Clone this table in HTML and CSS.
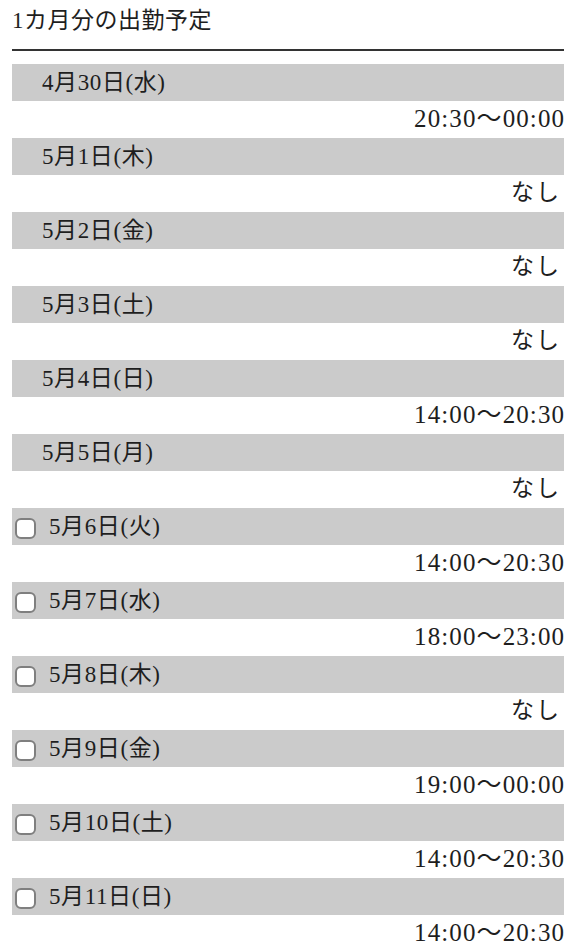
FILE: index.html
```html
<!DOCTYPE html>
<html lang="ja">
<head>
<meta charset="utf-8">
<link rel="stylesheet" href="styles.css">
</head>
<body>
<div class="page">
  <h1 class="title">1カ月分の出勤予定</h1>
  <hr class="rule">
  <ul class="schedule">
    <li class="day"><div class="date"><span class="label">4月30日(水)</span></div><div class="time">20:30〜00:00</div></li>
    <li class="day"><div class="date"><span class="label">5月1日(木)</span></div><div class="time none">なし</div></li>
    <li class="day"><div class="date"><span class="label">5月2日(金)</span></div><div class="time none">なし</div></li>
    <li class="day"><div class="date"><span class="label">5月3日(土)</span></div><div class="time none">なし</div></li>
    <li class="day"><div class="date"><span class="label">5月4日(日)</span></div><div class="time">14:00〜20:30</div></li>
    <li class="day"><div class="date"><span class="label">5月5日(月)</span></div><div class="time none">なし</div></li>
    <li class="day"><label class="date check"><input type="checkbox" class="box"><span class="label">5月6日(火)</span></label><div class="time">14:00〜20:30</div></li>
    <li class="day"><label class="date check"><input type="checkbox" class="box"><span class="label">5月7日(水)</span></label><div class="time">18:00〜23:00</div></li>
    <li class="day"><label class="date check"><input type="checkbox" class="box"><span class="label">5月8日(木)</span></label><div class="time none">なし</div></li>
    <li class="day"><label class="date check"><input type="checkbox" class="box"><span class="label">5月9日(金)</span></label><div class="time">19:00〜00:00</div></li>
    <li class="day"><label class="date check"><input type="checkbox" class="box"><span class="label">5月10日(土)</span></label><div class="time">14:00〜20:30</div></li>
    <li class="day"><label class="date check"><input type="checkbox" class="box"><span class="label">5月11日(日)</span></label><div class="time">14:00〜20:30</div></li>
  </ul>
</div>
</body>
</html>
```

FILE: styles.css
```css
html, body {
  margin: 0;
  padding: 0;
  background: #fff;
}
body {
  font-family: "Liberation Serif", "Noto Sans CJK JP", serif;
  color: #1e1e1e;
}
.page {
  padding: 0 12px;
}
.title {
  margin: 0;
  font-size: 23px;
  font-weight: normal;
  line-height: 42px;
  letter-spacing: 0.5px;
}
.rule {
  margin: 7px 0 13px;
  border: 0;
  border-top: 2px solid #333;
  height: 0;
}
.schedule {
  list-style: none;
  margin: 0;
  padding: 0;
}
.day {
  display: flex;
  flex-direction: column;
}
.date {
  display: flex;
  align-items: center;
  height: 37px;
  background: #cbcbcb;
  padding-left: 30px;
  font-size: 23px;
  letter-spacing: 0.6px;
}
.label {
  line-height: 1;
  margin-bottom: 0;
}
.date.check {
  padding-left: 3px;
}
.box {
  appearance: none;
  -webkit-appearance: none;
  margin: 3px 13px 0 0;
  width: 21px;
  height: 21px;
  box-sizing: border-box;
  border: 2px solid #7f7f7f;
  border-radius: 6px;
  background: #fff;
  flex: none;
}
.time {
  height: 37px;
  line-height: 36px;
  text-align: right;
  font-size: 25px;
  letter-spacing: 1.1px;
  margin-right: -1.1px;
}
.time.none {
  font-size: 23px;
  letter-spacing: 2px;
  margin-right: 3px;
}
```
